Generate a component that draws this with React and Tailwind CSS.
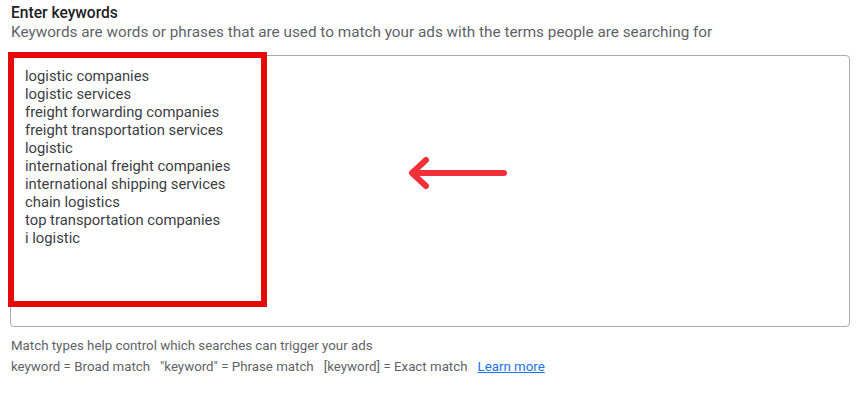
export default function App() {
  const keywords = [
    'logistic companies',
    'logistic services',
    'freight forwarding companies',
    'freight transportation services',
    'logistic',
    'international freight companies',
    'international shipping services',
    'chain logistics',
    'top transportation companies',
    'i logistic',
  ]

  return (
    <div className="w-[859px] h-[393px] bg-white overflow-hidden" style={{ fontFamily: 'Roboto, "Liberation Sans", sans-serif' }}>
      <div className="pl-[11px] pr-[9px] pt-[4px]">
        <p className="text-[15.6px] leading-[18px] font-medium text-[#202124]">Enter keywords</p>
        <p className="text-[15.3px] leading-[20px] text-[#5f6368]">
          Keywords are words or phrases that are used to match your ads with the terms people are searching for
        </p>

        {/* keyword box */}
        <div className="relative -ml-[1px] mt-[13px] h-[272px] rounded-[4px] border border-[#a9acb0]">
          <div className="pt-[11px] pl-[14px] text-[14.8px] leading-[18px] text-[#3c4043]">
            {keywords.map(k => (
              <div key={k}>{k}</div>
            ))}
          </div>

          {/* annotation */}
          <div className="absolute left-[-3px] top-[-4px] w-[259px] h-[255px] border-[6px] border-[#e60a0a]" />
          <svg className="absolute left-[388px] top-[99px]" width="120" height="36" viewBox="0 0 120 36">
            <path d="M14 18 H105 M27 5 L13 18 L27 31" fill="none" stroke="#f2303a" strokeWidth="6" strokeLinecap="round" strokeLinejoin="round" />
          </svg>
        </div>

        <div className="mt-[8px] text-[13.3px] leading-[21px] text-[#5f6368]">
          <p>Match types help control which searches can trigger your ads</p>
          <p className="flex gap-[10px]">
            <span>keyword = Broad match</span>
            <span>"keyword" = Phrase match</span>
            <span>[keyword] = Exact match</span>
            <a className="text-[#1a73e8] underline">Learn more</a>
          </p>
        </div>
      </div>
    </div>
  )
}
